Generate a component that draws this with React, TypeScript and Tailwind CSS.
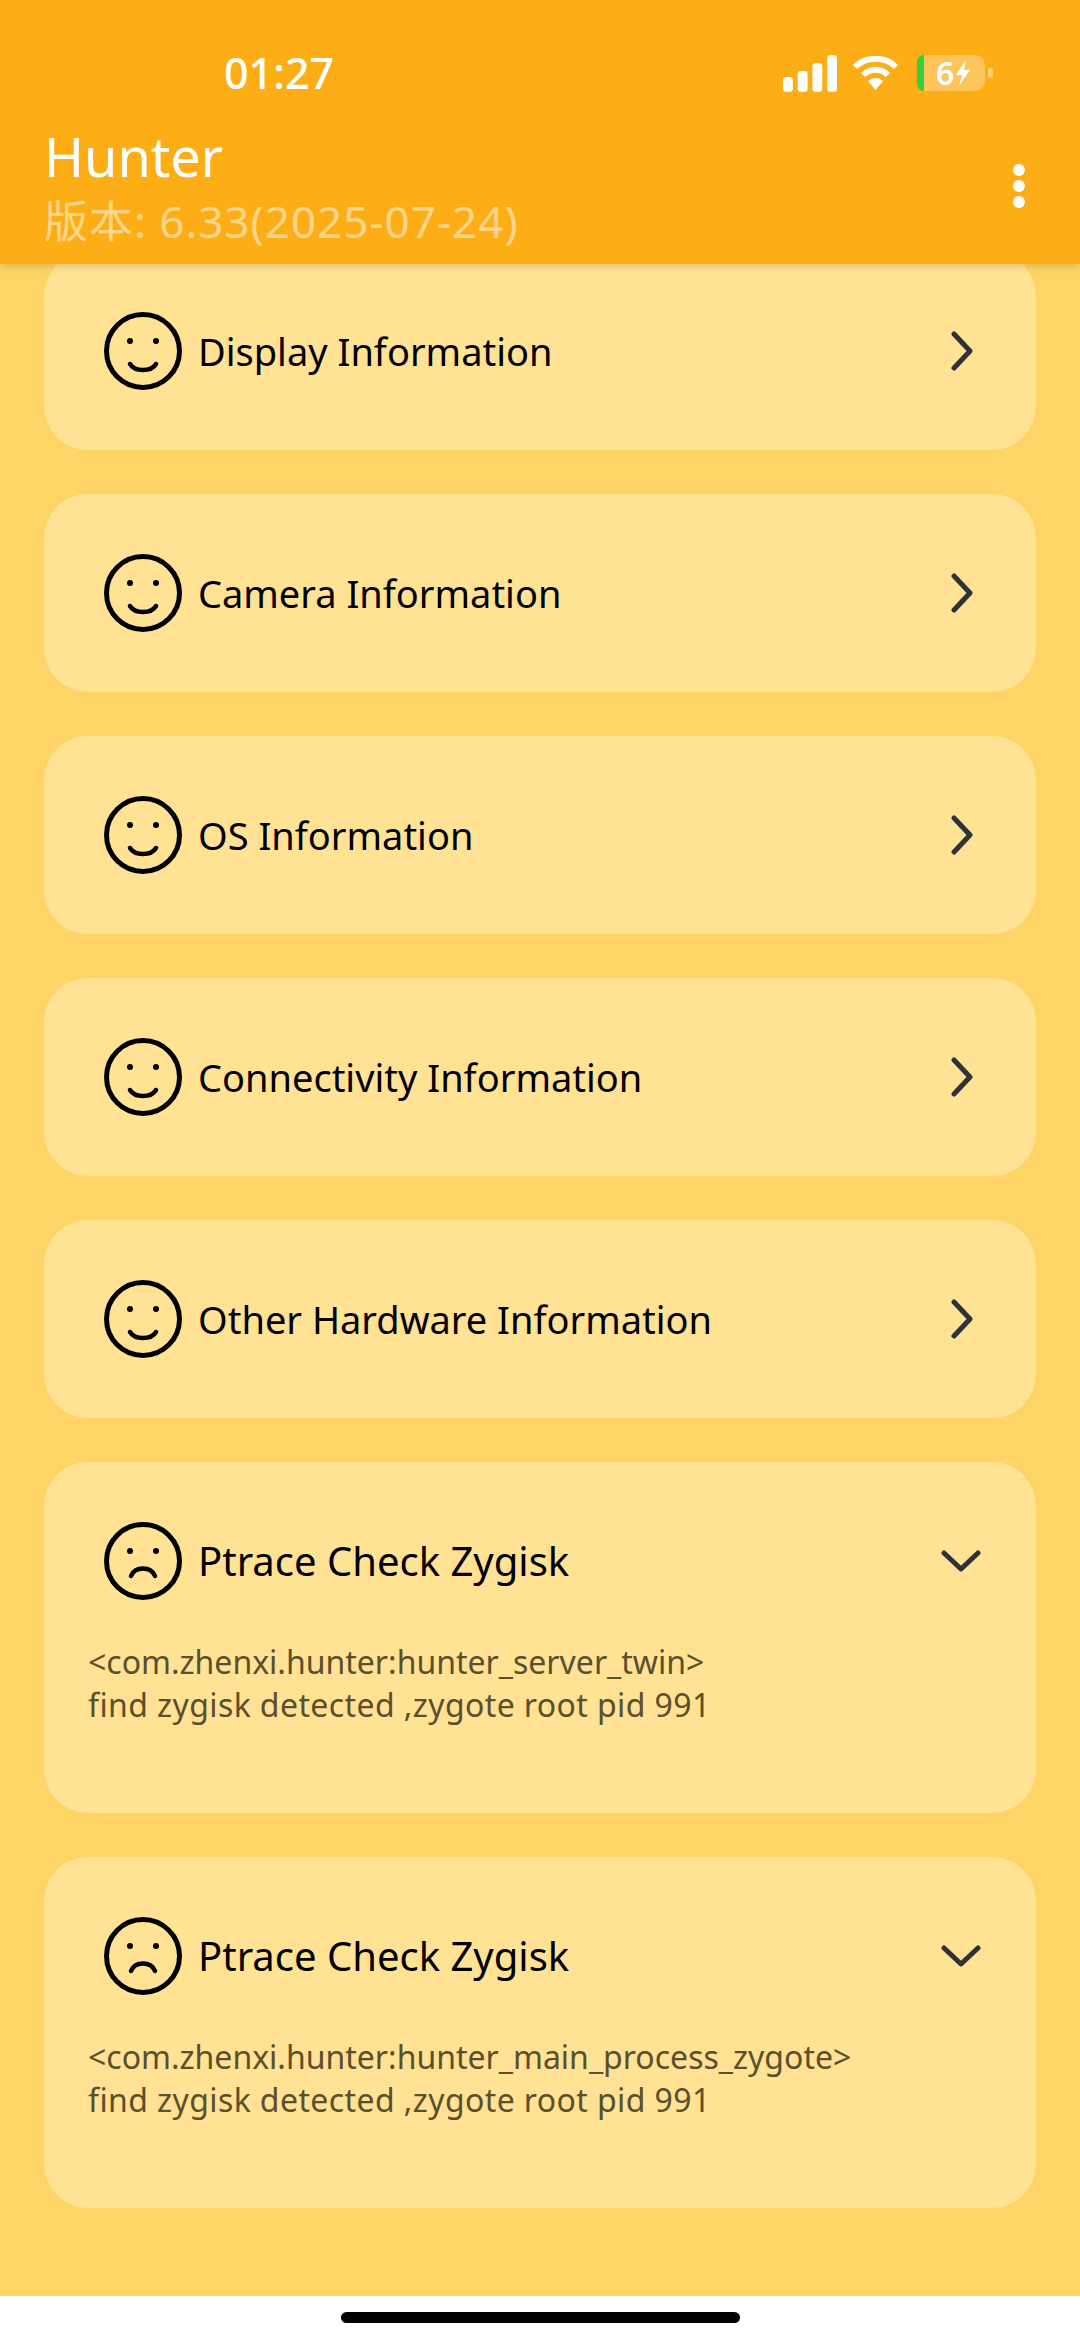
const font = { fontFamily: '"Noto Sans", "Noto Sans CJK SC", sans-serif' };

function Face({ sad }: { sad?: boolean }) {
  return (
    <svg width="78" height="78" viewBox="0 0 78 78" fill="none" stroke="#000" strokeLinecap="round" className="shrink-0">
      <circle cx="39" cy="39" r="36.5" strokeWidth="5" />
      <circle cx="26" cy="29" r="3" fill="#000" stroke="none" />
      <circle cx="52" cy="29" r="3" fill="#000" stroke="none" />
      {sad ? (
        <path d="M27 54 C31 44 47 44 51 54" strokeWidth="4.5" />
      ) : (
        <path d="M26 52 C31 60 47 60 52 52" strokeWidth="4.5" />
      )}
    </svg>
  );
}

function ChevronRight() {
  return (
    <svg width="26" height="40" viewBox="0 0 26 40" fill="none" stroke="#2e3138" strokeWidth="5" strokeLinecap="round" strokeLinejoin="round">
      <path d="M5 3 L21 20 L5 37" />
    </svg>
  );
}

function ChevronDown() {
  return (
    <svg width="40" height="24" viewBox="0 0 40 24" fill="none" stroke="#2e3138" strokeWidth="5" strokeLinecap="round" strokeLinejoin="round">
      <path d="M3 4 L20 20 L37 4" />
    </svg>
  );
}

function Row({ title }: { title: string }) {
  return (
    <div className="h-[198px] rounded-[44px] bg-[#ffe294] flex items-center pl-[60px] pr-[61px] first:-mt-[12px]">
      <Face />
      <span className="ml-[16px] flex-1 text-[38px] text-black">{title}</span>
      <ChevronRight />
    </div>
  );
}

function Expanded({ process }: { process: string }) {
  return (
    <div className="h-[351px] rounded-[44px] bg-[#ffe294] pl-[44px] pr-[55px] pt-[60px]">
      <div className="flex items-center pl-[16px]">
        <Face sad />
        <span className="ml-[16px] flex-1 text-[40px] text-black">Ptrace Check Zygisk</span>
        <ChevronDown />
      </div>
      <div className="mt-[40px] text-[32px] leading-[43px] text-[#5b4f2c]">
        <p>{process}</p>
        <p className="tracking-[0.4px]">find zygisk detected ,zygote root pid 991</p>
      </div>
    </div>
  );
}

export default function App() {
  const rows = ["Display Information", "Camera Information", "OS Information", "Connectivity Information", "Other Hardware Information"];

  return (
    <div className="w-[1080px] h-[2340px] flex flex-col bg-white overflow-hidden" style={font}>

      {/* HEADER */}
      <header className="relative z-10 h-[264px] shrink-0 bg-[#fdae17] text-white shadow-[0_2px_8px_rgba(120,80,0,0.25)]">
        <div className="h-[126px] flex items-center justify-between pl-[224px] pr-[87px] pt-[20px]">
          <span className="text-[43px] font-medium">01:27</span>
          <div className="flex items-center gap-[15px]">
            <svg width="54" height="37" viewBox="0 0 55 37" fill="#fff">
              <rect x="0" y="22" width="10" height="15" rx="3" />
              <rect x="15" y="16" width="10" height="21" rx="3" />
              <rect x="30" y="8" width="10" height="29" rx="3" />
              <rect x="45" y="0" width="10" height="37" rx="3" />
            </svg>
            <svg width="47" height="34" viewBox="0 0 47 34" fill="none" stroke="#fff" strokeWidth="6">
              <path d="M3 11 C14 0 33 0 44 11" />
              <path d="M11 19 C18 12 29 12 36 19" />
              <path d="M16 25 L23.5 34 L31 25 C27 21 20 21 16 25 Z" fill="#fff" stroke="none" />
            </svg>
            <div className="flex items-center gap-[3px] ml-[3px]">
              <div className="w-[68px] h-[36px] rounded-[10px] bg-white/30 flex items-center">
                <div className="w-[7px] h-full rounded-l-[10px] bg-[#34d03f] shrink-0" />
                <span className="ml-[12px] text-[32px] leading-[36px] font-semibold">6</span>
                <svg width="14" height="26" viewBox="0 0 14 26" fill="#fff" className="ml-[2px]">
                  <path d="M10 0 L0 15 H6 L3 26 L14 10 H8 Z" />
                </svg>
              </div>
              <div className="w-[5px] h-[10px] rounded-full bg-white/40" />
            </div>
          </div>
        </div>
        <div className="flex items-center justify-between pl-[44px] pr-[55px]">
          <div>
            <h1 className="text-[54px] leading-[60px]">Hunter</h1>
            <p className="text-[44px] leading-[70px] tracking-[1px] text-white/50">版本: 6.33(2025-07-24)</p>
          </div>
          <div className="flex flex-col gap-[4px] -mt-[10px]">
            <span className="w-[12px] h-[12px] rounded-full bg-white" />
            <span className="w-[12px] h-[12px] rounded-full bg-white" />
            <span className="w-[12px] h-[12px] rounded-full bg-white" />
          </div>
        </div>
      </header>

      {/* LIST */}
      <main className="h-[2032px] shrink-0 bg-[#ffd466] overflow-hidden px-[44px] flex flex-col gap-[44px]">
        {rows.map((r) => (
          <Row key={r} title={r} />
        ))}
        <Expanded process="<com.zhenxi.hunter:hunter_server_twin>" />
        <Expanded process="<com.zhenxi.hunter:hunter_main_process_zygote>" />
      </main>

      {/* HOME BAR */}
      <div className="flex-1 flex justify-center pt-[16px]">
        <div className="w-[399px] h-[11px] rounded-full bg-black" />
      </div>
    </div>
  );
}
